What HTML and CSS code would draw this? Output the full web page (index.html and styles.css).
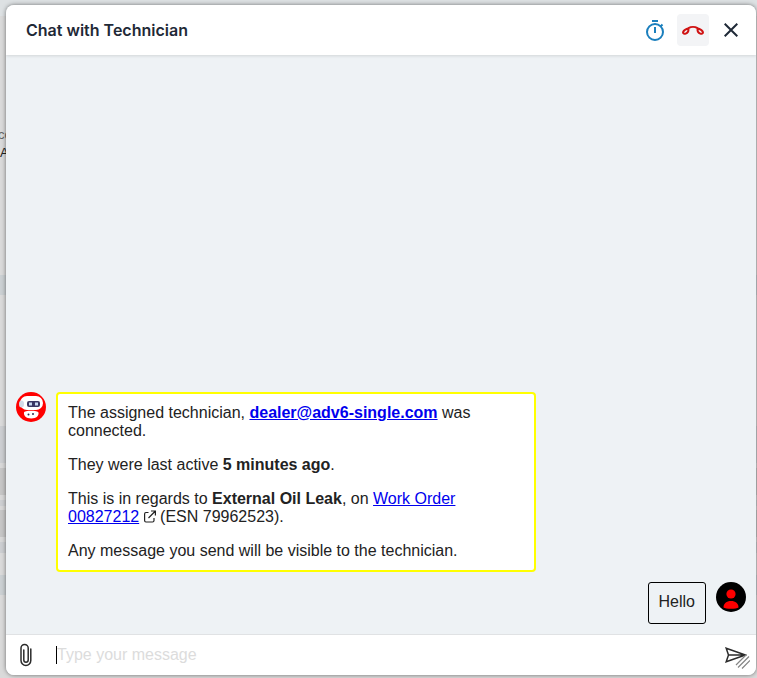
FILE: index.html
```html
<!DOCTYPE html>
<html lang="en">
<head>
    <meta charset="UTF-8">
    <meta name="viewport" content="width=device-width, initial-scale=1.0">
    <title>Chat with Technician</title>
    <link rel="stylesheet" href="styles.css">
</head>
<body>
    <!-- page behind the dialog -->
    <div class="backdrop" aria-hidden="true">
        <div class="backdrop-text">co<br><b>A</b></div>
    </div>

    <main class="chat">
        <header class="chat-header">
            <h1>Chat with Technician</h1>
            <button type="button" class="icon-button" aria-label="Timer">
                <svg width="20" height="22" viewBox="0 0 20 22" fill="none" stroke="#1b7fbd" stroke-width="2">
                    <circle cx="10" cy="13" r="8"/>
                    <path d="M7 2h6M10 8v6M15.500 7.500l2-2"/>
                </svg>
            </button>
            <button type="button" class="icon-button hang-up" aria-label="End chat">
                <svg width="24" height="12" viewBox="0 0 24 12" fill="none" stroke="#d01313" stroke-width="2" stroke-linejoin="round">
                    <path d="M7.500 4.200C10 2.600 14 2.600 16.500 4.200C19.500 5.200 21.500 6.600 22 8.200C22.200 9.600 20.500 10 19.300 9.600C17.500 9 16.300 7.500 16.500 4.200M7.500 4.200C4.500 5.200 2.500 6.600 2 8.200C1.800 9.600 3.500 10 4.700 9.600C6.500 9 7.700 7.500 7.500 4.200"/>
                </svg>
            </button>
            <button type="button" class="icon-button" aria-label="Close">
                <svg width="14" height="14" viewBox="0 0 14 14" fill="none" stroke="#1f2937" stroke-width="2">
                    <path d="M.7.7l12.600 12.600M13.300.7L.7 13.300"/>
                </svg>
            </button>
        </header>

        <section class="messages">
            <div class="message">
                <svg class="avatar" viewBox="0 0 30 30">
                    <circle cx="15" cy="15" r="15" fill="#f00"/>
                    <rect x="4" y="4" width="23" height="14" rx="7" fill="#fff"/>
                    <ellipse cx="5.500" cy="12" rx="2.500" ry="3.500" fill="#d3dae8"/>
                    <rect x="11" y="9" width="13" height="6" rx="2" fill="#3a3763"/>
                    <rect x="13" y="10.500" width="3" height="3" fill="#c9d8f0"/>
                    <rect x="19" y="10.500" width="3" height="3" fill="#c9d8f0"/>
                    <path d="M8 20.500c0-2.500 14-2.500 14.500 0 .5 3-2 6-7.200 6S7.500 23.500 8 20.500z" fill="#fff"/>
                    <circle cx="12.500" cy="22.500" r="1" fill="#2b2850"/>
                    <circle cx="17" cy="22" r="1" fill="#2b2850"/>
                </svg>
                <div class="bubble bubble-bot">
                    <p>The assigned technician, <a href="#"><b>dealer@adv6-single.com</b></a> was connected.</p>
                    <p>They were last active <b>5 minutes ago</b>.</p>
                    <p>This is in regards to <b>External Oil Leak</b>, on <a href="#">Work Order 00827212</a>
                        <svg class="external" width="12" height="13" viewBox="0 0 12 13" fill="none" stroke="#222" stroke-width="1.200">
                            <path d="M4.500 2.500H2A1.500 1.500 0 0 0 .6 4v6.500A1.500 1.500 0 0 0 2 12h6.500a1.500 1.500 0 0 0 1.500-1.500V8M7 1h4.400v4.500M11.400 1L4.500 8"/>
                        </svg>
                        (ESN 79962523).</p>
                    <p>Any message you send will be visible to the technician.</p>
                </div>
            </div>
            <div class="message message-own">
                <div class="bubble bubble-own">Hello</div>
                <svg class="avatar" viewBox="0 0 30 30">
                    <circle cx="15" cy="15" r="15" fill="#000"/>
                    <circle cx="15" cy="12" r="4.600" fill="#f00"/>
                    <path d="M7.500 25.500c0-4 3-6.500 7.500-6.500s7.500 2.500 7.500 6.500c-2 1.800-13 1.800-15 0z" fill="#f00"/>
                </svg>
            </div>
        </section>

        <form class="composer">
            <button type="button" class="attach" aria-label="Attach file">
                <svg width="12" height="24" viewBox="0 0 12 24" fill="none" stroke="#2b2b2b" stroke-width="1.500" stroke-linecap="round">
                    <path d="M10.800 6v11.500a4.900 4.900 0 0 1-9.800 0V5a3.600 3.600 0 0 1 7.200 0v12a2.200 2.200 0 0 1-4.400 0V7"/>
                </svg>
            </button>
            <span class="caret"></span>
            <input type="text" class="message-input" aria-label="Message" placeholder="Type your message">
            <button type="submit" class="send" aria-label="Send">
                <svg width="22" height="16" viewBox="0 0 22 16" fill="none" stroke="#2b2b2b" stroke-width="1.500">
                    <path d="M1.200 1.200L20.500 8 1.200 14.800 3.500 8zM3.500 8h17"/>
                </svg>
            </button>
        </form>

        <!-- resize grip -->
        <svg class="grip" width="15" height="15" viewBox="0 0 15 15" fill="none" stroke="#858585" stroke-width="1.200">
            <path d="M1 11L11 1M3 13.500L14 2.500M7 14.500L15 6.500"/>
        </svg>
    </main>
</body>
</html>
```
FILE: styles.css
```css
* {
    box-sizing: border-box;
}
body {
    position: relative;
    display: flex;
    height: 100vh;
    margin: 0;
    padding: 5px 1px 3px 6px;
    overflow: hidden;
    background-color: #d6d6d6;
    color: #222;
    font-family: "Liberation Sans", Arial, sans-serif;
    font-size: 16px;
    line-height: 18px;
}
.backdrop {
    position: absolute;
    inset: 0;
    overflow: hidden;
    background: linear-gradient(
        #dde1e3 16px, #dadada 16px, #dadada 275px,
        #cbd0d3 275px, #cbd0d3 295px, #dadada 295px, #dadada 426px,
        #ccced1 426px, #ccced1 463px, #d8d8d8 463px, #d8d8d8 468px,
        #c6c6c6 468px, #c6c6c6 495px, #d8d8d8 495px, #d8d8d8 500px,
        #cdcfd2 500px, #cdcfd2 506px, #d8d8d8 506px, #d8d8d8 510px,
        #c6c6c6 510px, #c6c6c6 537px, #d8d8d8 537px, #d8d8d8 542px,
        #ccced1 542px, #ccced1 553px, #dadada 553px, #dadada 575px,
        #cbd0d3 575px, #cbd0d3 595px, #dadada 595px
    );
}
.backdrop-text {
    margin-left: -2px;
    padding-top: 126px;
    color: #666;
    font-size: 13px;
}
.backdrop-text b {
    padding-left: 2px;
    color: #222;
    font-weight: normal;
}
.chat {
    position: relative;
    display: flex;
    flex: 1;
    flex-direction: column;
    overflow: hidden;
    border-radius: 8px;
    background-color: #eef2f5;
    box-shadow: 0 0 4px rgba(0, 0, 0, 0.5);
}
button {
    display: flex;
    align-items: center;
    justify-content: center;
    padding: 0;
    border: none;
    background: none;
    cursor: pointer;
}
.chat-header {
    z-index: 1;
    display: flex;
    align-items: center;
    gap: 6px;
    height: 50px;
    padding: 0 9px 0 20px;
    background-color: #fff;
    box-shadow: 0 1px 3px rgba(0, 0, 0, 0.12);
}
.chat-header h1 {
    flex: 1;
    margin: 0;
    color: #1f2937;
    font-family: Inter, sans-serif;
    font-size: 16px;
    font-weight: 600;
}
.icon-button {
    width: 32px;
    height: 32px;
    border-radius: 4px;
}
.hang-up {
    background-color: #f3f4f6;
}
.messages {
    display: flex;
    flex: 1;
    flex-direction: column;
    justify-content: flex-end;
    gap: 10px;
    padding: 10px;
}
.message {
    display: flex;
    align-items: flex-start;
    gap: 10px;
}
.message-own {
    justify-content: flex-end;
}
.avatar {
    flex: none;
    width: 30px;
    height: 30px;
}
.bubble {
    padding: 10px;
    border-radius: 4px;
}
.bubble-bot {
    max-width: 480px;
    border: 2px solid #ff0;
    background-color: #fff;
}
.bubble-bot p {
    margin: 0 0 16px;
}
.bubble-bot p:last-child {
    margin-bottom: 0;
}
.bubble-bot a {
    color: #0000ee;
}
.external {
    vertical-align: -1px;
}
.bubble-own {
    padding-bottom: 12px;
    border: 1px solid #000;
    border-radius: 3px;
}
.composer {
    display: flex;
    align-items: center;
    height: 41px;
    padding: 0 9px 0 10px;
    border-top: 1px solid #e0e2e4;
    background-color: #fff;
}
.attach {
    width: 20px;
    height: 30px;
    margin-right: 20px;
}
.caret {
    width: 1px;
    height: 18px;
    background-color: #000;
}
.message-input {
    flex: 1;
    min-width: 0;
    padding: 0;
    border: none;
    outline: none;
    background: none;
    font: inherit;
}
.message-input::placeholder {
    color: #dcdcdc;
}
.send {
    width: 22px;
    height: 30px;
}
.grip {
    position: absolute;
    right: 6px;
    bottom: 6px;
}
```
